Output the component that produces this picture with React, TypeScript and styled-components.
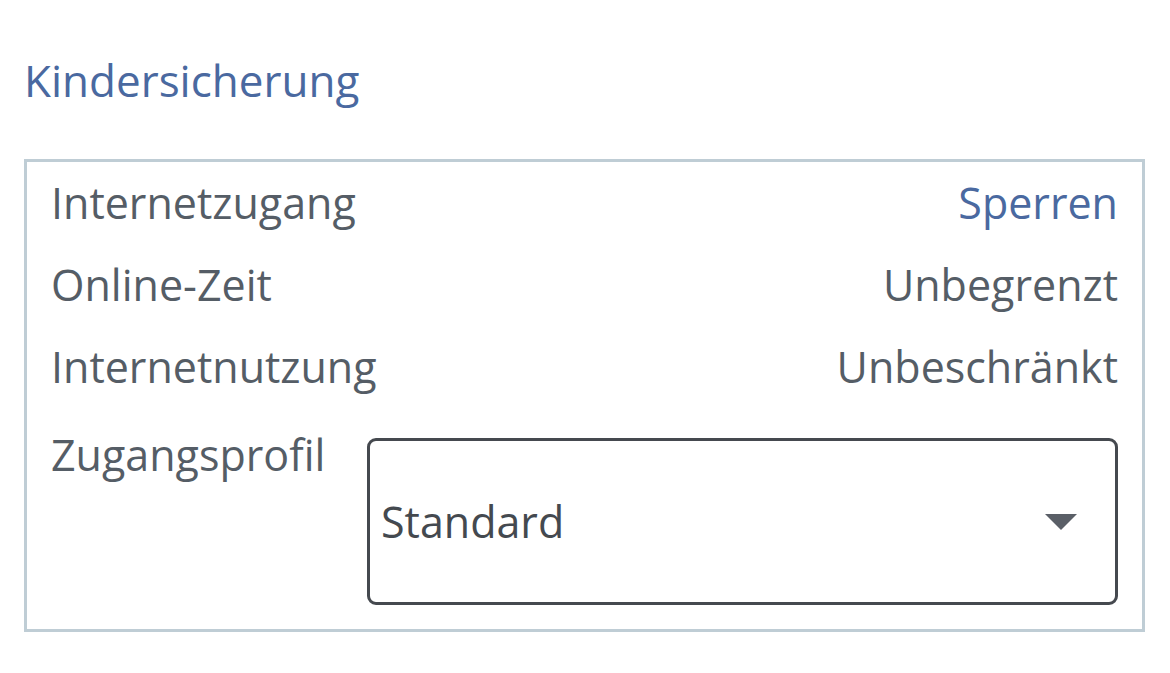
import React from "react";
import styled, { createGlobalStyle } from "styled-components";

const GlobalStyle = createGlobalStyle`
  html, body {
    margin: 0;
    padding: 0;
    background: #ffffff;
  }
  body {
    font-family: "Open Sans", "Noto Sans", "Liberation Sans", sans-serif;
  }
`;

const Page = styled.div`
  width: 1170px;
  padding: 50px 25px 0 24px;
  box-sizing: border-box;
`;

const Title = styled.h2`
  margin: 0 0 49px 0;
  font-size: 44px;
  line-height: 60px;
  font-weight: 400;
  color: #4a69a0;
`;

const Panel = styled.section`
  width: 1121px;
  box-sizing: border-box;
  border: 3px solid #bfcdd5;
  padding: 0 24px 24px 24px;
`;

const Row = styled.div`
  display: flex;
  justify-content: space-between;
  align-items: baseline;
  font-size: 43px;
  line-height: 82px;
`;

const Label = styled.span`
  color: #555d66;
`;

const Value = styled.span<{ $link?: boolean }>`
  color: ${(p) => (p.$link ? "#4a69a0" : "#555d66")};
  cursor: ${(p) => (p.$link ? "pointer" : "default")};
`;

const SelectRow = styled.div`
  display: grid;
  grid-template-columns: 316px 1fr;
  align-items: start;
  margin-top: 6px;
  font-size: 43px;
  line-height: 82px;
`;

const SelectBox = styled.div`
  margin-top: 24px;
  height: 167px;
  box-sizing: border-box;
  border: 3px solid #45494f;
  border-radius: 9px;
  display: flex;
  align-items: center;
  justify-content: space-between;
  padding: 0 38px 0 11px;
  color: #44494f;
  font-size: 43px;
  line-height: 1;
  cursor: pointer;
`;

const Arrow = () => (
  <svg width="32" height="16" viewBox="0 0 32 16" aria-hidden="true">
    <polygon points="0,0 32,0 16,16" fill="#5a5f67" />
  </svg>
);

const rows: { label: string; value: string; link?: boolean }[] = [
  { label: "Internetzugang", value: "Sperren", link: true },
  { label: "Online-Zeit", value: "Unbegrenzt" },
  { label: "Internetnutzung", value: "Unbeschränkt" },
];

export default function App() {
  return (
    <>
      <GlobalStyle />
      <Page>
        <Title>Kindersicherung</Title>
        <Panel>
          {rows.map((r) => (
            <Row key={r.label}>
              <Label>{r.label}</Label>
              <Value $link={r.link}>{r.value}</Value>
            </Row>
          ))}
          <SelectRow>
            <Label>Zugangsprofil</Label>
            <SelectBox role="combobox" aria-expanded="false">
              <span>Standard</span>
              <Arrow />
            </SelectBox>
          </SelectRow>
        </Panel>
      </Page>
    </>
  );
}
